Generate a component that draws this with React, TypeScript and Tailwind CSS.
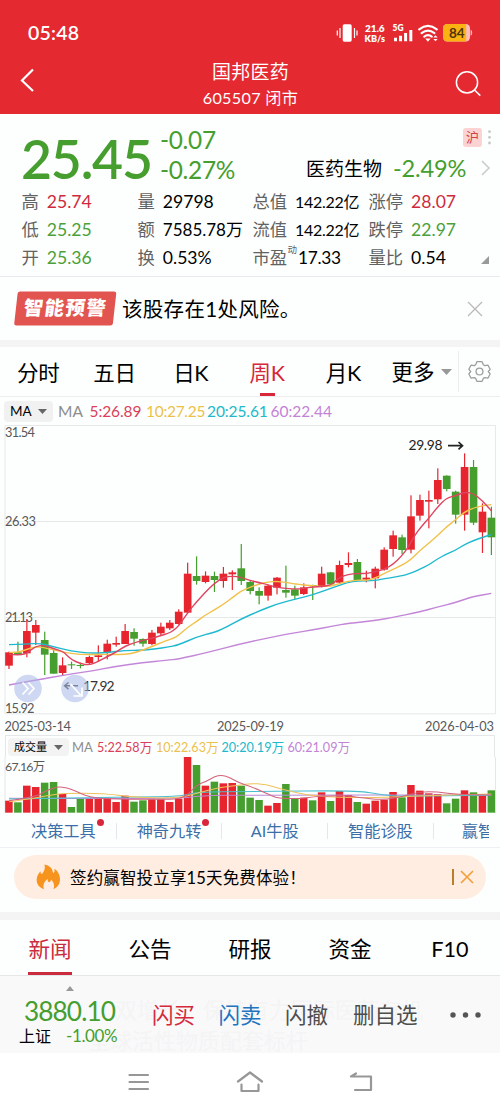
import React from "react";

type Candle = [number, number, number, number, 0 | 1];

// [high, body top, body bottom, low, rising] in thirds of a pixel
const candles: Candle[] = [
  [695, 697, 737, 747, 1], [665, 697, 703, 705, 0], [598, 633, 700, 712, 1], [600, 615, 638, 675, 1],
  [635, 660, 704, 765, 0], [690, 699, 761, 761, 0], [712, 736, 759, 768, 1], [725, 733, 735, 747, 0],
  [728, 735, 736, 745, 0], [707, 711, 729, 735, 1], [676, 706, 711, 724, 1], [659, 671, 697, 718, 1],
  [650, 669, 674, 680, 1], [612, 633, 672, 672, 1], [625, 636, 656, 677, 0], [655, 657, 671, 680, 0],
  [630, 638, 672, 676, 1], [608, 620, 640, 645, 1], [600, 608, 625, 630, 1], [568, 575, 612, 614, 1],
  [428, 461, 578, 580, 1], [409, 468, 483, 494, 0], [454, 467, 486, 490, 1], [455, 468, 480, 516, 0],
  [441, 461, 483, 503, 1], [451, 457, 463, 510, 1], [372, 445, 483, 495, 0], [480, 486, 513, 523, 0],
  [502, 513, 527, 553, 0], [494, 497, 527, 542, 1], [471, 473, 503, 523, 1], [437, 510, 518, 533, 0],
  [497, 508, 527, 537, 0], [490, 502, 522, 525, 1], [494, 495, 498, 540, 0], [440, 461, 500, 502, 1],
  [456, 457, 493, 497, 0], [422, 435, 488, 492, 1], [397, 429, 435, 442, 1], [417, 426, 480, 482, 0],
  [452, 473, 479, 487, 1], [440, 446, 475, 505, 1], [382, 389, 449, 452, 1], [332, 346, 387, 410, 1],
  [344, 352, 390, 402, 0], [226, 289, 389, 400, 1], [224, 240, 287, 302, 1], [212, 240, 245, 325, 1],
  [145, 180, 238, 252, 1], [166, 167, 207, 214, 0], [212, 215, 284, 311, 0], [100, 141, 284, 332, 1],
  [120, 141, 308, 315, 0], [250, 275, 337, 399, 1], [260, 293, 352, 405, 0],
];

const volumes: number[] = [
  212, 217, 167, 171, 158, 156, 192, 231, 205, 205, 201, 203, 216, 197, 215, 211, 208, 208, 216, 206, 75, 105, 167,
  155, 160, 159, 167, 203, 210, 227, 219, 162, 205, 203, 211, 187, 213, 183, 195, 216, 221, 212, 209, 186, 202, 165,
  182, 190, 192, 220, 206, 181, 187, 197, 181,
];

const volumeFalls = new Set([1, 4, 5, 7, 8, 14, 15, 21, 23, 26, 27, 28, 31, 32, 34, 36, 39, 44, 49, 50, 52, 54]);

const MA5 =
  "27,703 60,706 85,698 107,678 134,676 160,686 187,693 200,705 214,718 240,731 268,735 294,725 321,710 348,697 375,678 402,669 428,661 455,655 482,647 505,640 520,632 536,618 563,578 589,546 616,517 643,490 670,472 697,468 723,472 750,481 777,488 804,494 831,503 884,507 911,506 938,500 991,499 1018,472 1045,463 1072,460 1099,461 1125,455 1152,449 1179,433 1205,408 1225,382 1245,345 1260,325 1286,295 1312,262 1340,233 1366,228 1393,216 1420,220 1447,242 1474,272";
const MA10 =
  "27,697 53,698 80,688 107,680 134,683 187,696 240,704 321,703 375,704 410,697 455,680 500,661 520,655 536,646 563,622 589,605 616,585 643,570 670,553 697,533 723,513 750,502 777,492 804,486 831,484 857,487 884,492 938,498 991,500 1018,490 1045,484 1072,480 1099,481 1125,475 1150,462 1179,448 1205,436 1232,420 1259,392 1286,370 1312,347 1340,320 1366,300 1393,276 1420,264 1447,257 1474,254";
const MA20 =
  "27,674 80,672 120,670 160,680 214,693 268,700 321,698 375,691 428,691 470,686 500,682 536,675 589,651 643,637 670,626 723,597 777,573 831,552 884,538 938,525 1000,502 1045,487 1072,483 1125,482 1152,476 1205,468 1232,460 1259,448 1286,435 1312,417 1340,402 1366,391 1393,374 1420,362 1447,352 1474,344";
const MA60 =
  "27,795 107,780 214,762 268,754 348,739 428,728 500,721 536,717 616,699 723,671 831,648 884,638 938,630 1000,618 1045,610 1125,602 1179,592 1259,576 1312,561 1366,548 1393,538 1420,530 1474,520";

const V5 =
  "27,212 107,200 134,185 160,174 180,170 214,177 268,203 348,208 482,208 536,207 563,195 590,165 617,155 643,140 665,135 690,143 720,160 750,168 810,195 835,205 900,206 940,200 990,197 1045,197 1072,202 1150,210 1206,200 1259,185 1313,185 1360,193 1474,195";
const V10 =
  "27,215 100,205 134,198 187,190 310,190 400,202 536,205 590,190 660,172 720,166 750,160 795,163 857,180 940,200 1100,203 1206,200 1350,195 1474,192";
const V20 = "27,207 400,200 540,200 590,186 750,185 1072,181 1150,195 1206,199 1474,196";
const V60 = "27,205 536,207 600,197 750,195 1474,195";

/** Smooths a polyline through the midpoints of its segments. */
function smooth(points: string): string {
  const p = points.split(" ").map((s) => s.split(",").map(Number));
  let d = `M${p[0][0]} ${p[0][1]}`;
  for (let i = 1; i < p.length - 1; i++) {
    d += ` Q${p[i][0]} ${p[i][1]} ${(p[i][0] + p[i + 1][0]) / 2} ${(p[i][1] + p[i + 1][1]) / 2}`;
  }
  const last = p[p.length - 1];
  return `${d} L${last[0]} ${last[1]}`;
}

const RED = "#e6252f";
const GREEN = "#459e2e";

function StatusIcons() {
  return (
    <svg className="h-[22px] w-[138px]" viewBox="336 22 138 22" fill="#fff">
      <rect x="342.7" y="24.3" width="9" height="17.4" rx="1.6" />
      <path d="M340 28v10M337.3 30.5v5M354.5 28v10M357 30.5v5" stroke="#fff" strokeWidth="1.2" fill="none" />
      <text x="365" y="32" fontSize="10" fontWeight="800" textLength="19.5">21.6</text>
      <text x="364.5" y="41.5" fontSize="9" fontWeight="800" textLength="20.5">KB/s</text>
      <text x="392.5" y="31" fontSize="8.4" fontWeight="800" textLength="11">5G</text>
      <path d="M395.5 41.2v-3.5M400.5 41.2v-5.5M405.6 41.2v-8.2M410.8 41.2v-11.2" stroke="#fff" strokeWidth="3" />
      <path d="M419.2 29.3q8.8-6.8 17.6 0M421.6 33.1q6.4-5 12.8 0M424.3 36.6q3.7-2.8 7.4 0" stroke="#fff" strokeWidth="2.2" fill="none" strokeLinecap="round" />
      <path d="M425.2 38.5h5.4l-2.7 3.3z M433.3 37.5l2.2-2.3 2.2 2.3z M433.3 39l2.2 2.3 2.2-2.3z" />
      <rect x="443" y="24" width="27" height="17.5" rx="4.2" fill="#ffbcc0" />
      <path d="M447.2 24h19v17.5h-19a4.2 4.2 0 0 1-4.2-4.2v-9.1a4.2 4.2 0 0 1 4.2-4.2z" fill="#fbb213" />
      <path d="M470.6 29.5q1.6.8 1.6 3.2t-1.6 3.2z" fill="#ffbcc0" />
      <text x="449" y="37.8" fontSize="13.5" fontWeight="700" textLength="15.6" fill="#50350a">84</text>
    </svg>
  );
}

function Header() {
  return (
    <header className="flex h-[114px] flex-col bg-[#e42930] text-white">
      <div className="flex h-[22px] items-center justify-between pl-7 pr-[26px] mt-[22px]">
        <span className="text-[19.5px] font-semibold leading-none tracking-[0.2px]">05:48</span>
        <StatusIcons />
      </div>
      <div className="flex flex-1 items-start justify-between pl-[19px] pr-[18px]">
        <svg className="mt-[24px] h-6 w-[27px]" viewBox="0 0 27 24" fill="none" stroke="#fff" strokeWidth="2.2">
          <path d="M14 1.5 3 12.5l11 10.5" />
        </svg>
        <div className="flex flex-col items-center pt-[16px]">
          <h1 className="text-[19px] leading-[24px] tracking-[0.2px]">国邦医药</h1>
          <p className="mt-[2px] text-[16.2px] leading-[24px] tracking-[0.3px]">605507 闭市</p>
        </div>
        <svg className="mt-[26px] h-[27px] w-[27px]" viewBox="0 0 27 27" fill="none" stroke="#fff" strokeWidth="1.5">
          <circle cx="12" cy="12.4" r="10.6" />
          <path d="m19.5 20 5.8 5.6" />
        </svg>
      </div>
    </header>
  );
}

function Stat({ label, value, color = "text-black", size = "text-[17.6px]", note }: {
  label: string; value: string; color?: string; size?: string; note?: string;
}) {
  return (
    <div className="flex h-7 items-center whitespace-nowrap">
      <span className="relative text-[17.3px] text-[#626262]">
        {label}
        {note && <small className="absolute -right-[10px] top-0 text-[9.5px] leading-none">{note}</small>}
      </span>
      <span className={`${note ? "ml-[11px]" : "ml-2"} ${size} ${color}`}>{value}</span>
    </div>
  );
}

function Quote() {
  const up = "text-[#cf2a3c]";
  const down = "text-[#4c9f39]";
  return (
    <section className="flex h-[163px] flex-col border-b border-[#e9e9ee]">
      <div className="flex h-[74px] pl-[21px]">
        <strong className="w-[139px] pt-[14px] text-[53.5px] font-semibold leading-[60px] tracking-[-1.2px] text-[#459e2e]">25.45</strong>
        <div className="w-[142px] pt-[11px] text-[24.4px] leading-[29.5px] tracking-[-0.3px] text-[#459e2e]">
          <p>-0.07</p>
          <p>-0.27%</p>
        </div>
        <div className="flex flex-1 flex-col">
          <div className="flex h-[38px] items-start justify-end gap-[6px] pr-[9px] pt-[14px]">
            <span className="flex h-[19px] w-[19px] items-center justify-center rounded-[3px] bg-[#fbd3d3] text-[13px] leading-none text-[#d04146]">沪</span>
            <svg className="mt-[2px] h-4 w-[3px]" viewBox="0 0 3 16" fill="#c7c7c7">
              <circle cx="1.5" cy="1.7" r="1.4" /><circle cx="1.5" cy="7.3" r="1.4" /><circle cx="1.5" cy="13" r="1.4" />
            </svg>
          </div>
          <div className="flex h-8 items-center pl-[4px]">
            <span className="w-[87px] pt-[2px] text-[19px] text-black">医药生物</span>
            <span className="pt-[2px] text-[23.6px] tracking-[-0.2px] text-[#459e2e]">-2.49%</span>
            <svg className="ml-auto mr-[10px] h-4 w-[9px]" viewBox="0 0 9 16" fill="none" stroke="#c9c9c9" strokeWidth="1.5">
              <path d="m1 1 7 7-7 7" />
            </svg>
          </div>
        </div>
      </div>
      <div className="flex h-[87px] items-start pl-[21.5px]">
        <div className="w-[116px]">
          <Stat label="高" value="25.74" color={up} />
          <Stat label="低" value="25.25" color={down} />
          <Stat label="开" value="25.36" color={down} />
        </div>
        <div className="w-[115px]">
          <Stat label="量" value="29798" />
          <Stat label="额" value="7585.78万" size="text-[17px]" />
          <Stat label="换" value="0.53%" />
        </div>
        <div className="w-[116px]">
          <Stat label="总值" value="142.22亿" size="text-[16px] tracking-[-0.3px]" />
          <Stat label="流值" value="142.22亿" size="text-[16px] tracking-[-0.3px]" />
          <Stat label="市盈" note="动" value="17.33" size="text-[17.3px] tracking-[-0.3px]" />
        </div>
        <div className="w-[112.500px]">
          <Stat label="涨停" value="28.07" color={up} />
          <Stat label="跌停" value="22.97" color={down} />
          <Stat label="量比" value="0.54" />
        </div>
        <svg className="mt-[68px] h-2 w-2 self-start" viewBox="0 0 8 8"><path d="M8 0v8H0z" fill="#9a9a9a" /></svg>
      </div>
    </section>
  );
}

function Alert() {
  return (
    <section className="flex h-[63px] items-center pl-[14px] pr-[17px]">
      <svg className="h-[35px] w-[103px]" viewBox="0 0 103 35">
        <path d="M6 .5h94q2.5 0 2.2 2.5l-3.3 29.500q-.3 2-2.500 2H2.500q-2.500 0-2.200-2.500L3.600 2.500Q4 .5 6 .5z" fill="#e1544f" />
        <text x="0" y="0" transform="translate(9 24) skewX(-7)" fill="#fff" fontSize="19.500" fontWeight="900" textLength="82">智能预警</text>
      </svg>
      <p className="ml-[5px] pt-[2px] text-[20.5px] tracking-[0.300px] text-black">该股存在1处风险。</p>
      <svg className="ml-auto h-4 w-4" viewBox="0 0 16 16" stroke="#b9b9b9" strokeWidth="1.3">
        <path d="m1 1 14 14M15 1 1 15" />
      </svg>
    </section>
  );
}

function PeriodTabs() {
  const tabs = ["分时", "五日", "日K", "周K", "月K"];
  return (
    <nav className="flex h-[50px] items-stretch border-b border-[#ededf0] text-[21.500px] text-black">
      {tabs.map((t) => (
        <div key={t} className={t === "周K" ? "flex w-[76.300px] flex-col items-center text-[#d8263a]" : "flex w-[76.300px] flex-col items-center"}>
          <span className="h-[46px] leading-[52px] tracking-[-0.300px]">{t}</span>
          {t === "周K" && <i className="h-[3px] w-[15px] bg-[#d8263a]" />}
        </div>
      ))}
      <div className="flex flex-1 items-center pl-[10px]">
        <span className="pt-[2px]">更多</span>
        <svg className="ml-[6px] h-[6px] w-[11px]" viewBox="0 0 11 6"><path d="M0 0h11L5.500 6z" fill="#999" /></svg>
      </div>
      <div className="my-1 flex w-[42px] items-center justify-center border-l border-[#ededf0]">
        <svg className="h-[23px] w-[23px]" viewBox="0 0 24 24" fill="none" stroke="#9d9d9d" strokeWidth="1.35" strokeLinejoin="round">
          <path d="M9.300 1.800h5.400l1.300 3.200 1.600.9 3.300-.5 2.200 4.300-1.900 2.300 1.900 2.600-2.200 4.200-3.400-.500-1.500.9-1.300 3H9.300L8 19.200l-1.500-.9-3.400.5-2.200-4.200L2.800 12 .9 9.700l2.200-4.300 3.300.5L8 5z" />
          <circle cx="12" cy="12" r="3.600" />
        </svg>
      </div>
    </nav>
  );
}

function Selector({ text, wide }: { text: string; wide?: boolean }) {
  return (
    <button className={wide ? "flex h-[18px] w-[61px] items-center justify-between rounded-[4px] bg-[#f3f3f4] px-[6px] text-[11px] text-black" : "flex h-[21px] w-[49px] items-center justify-between rounded-[4px] bg-[#f1f1f2] px-[6px] text-[13.500px] text-black"}>
      {text}
      <svg className="h-[5px] w-[9px]" viewBox="0 0 9 5"><path d="M0 0h9L4.500 5z" fill="#666" /></svg>
    </button>
  );
}

function PriceChart() {
  const lines: [string, string][] = [[MA60, "#c386d8"], [MA20, "#1fb9cf"], [MA10, "#f2c14a"], [MA5, "#df4460"]];
  return (
    <svg className="h-[310px] w-full" viewBox="0 425 500 310">
      <path d="M5 425.500h490.500v288.300H5zM5 521.500h490M5 617.500h490" fill="none" stroke="#e6e8ea" />
      <g fontSize="12.800" fill="#585858">
        <text x="5" y="436.500" textLength="30">31.54</text>
        <text x="5" y="526" textLength="31">26.33</text>
        <text x="5" y="622" textLength="28">21.13</text>
        <text x="5" y="713" textLength="29.500">15.92</text>
        <text x="4.500" y="731" textLength="66.500">2025-03-14</text>
        <text x="217" y="731" textLength="67">2025-09-19</text>
        <text x="425" y="731" textLength="69">2026-04-03</text>
      </g>
      <g transform="translate(0 420) scale(.333333)">
        {candles.map(([high, top, bottom, low, up], i) => {
          const x = 27 + i * 26.8;
          const color = up ? RED : GREEN;
          return (
            <g key={i} fill={color}>
              <rect x={x - 1.8} y={high} width="3.600" height={low - high} />
              <rect x={x - 11.500} y={top} width="23" height={Math.max(bottom - top, 3)} />
            </g>
          );
        })}
        {lines.map(([points, color]) => (
          <path key={color} d={smooth(points)} fill="none" stroke={color} strokeWidth="4.200" />
        ))}
      </g>
      <g fontSize="13.800" fill="#222">
        <text x="408.500" y="450.300" textLength="34">29.98</text>
        <text x="83" y="690.500" textLength="31.500" fill="#333">17.92</text>
        <path d="M448 445.700h14M458.500 442l4 3.700-4 3.700" fill="none" stroke="#222" strokeWidth="1.700" />
        <path d="M68.500 682.500l-4 3.300 4 3.300M65 685.800h5M73 685.800h5" fill="none" stroke="#444" strokeWidth="1.400" />
      </g>
      <circle cx="28" cy="688.500" r="13.800" fill="#a9b8e8" fillOpacity=".55" />
      <circle cx="75" cy="688.500" r="13.800" fill="#a9b8e8" fillOpacity=".55" />
      <path d="m22.500 682.500 5.500 6-5.500 6M28.500 682.500l5.500 6-5.500 6M70.500 684l10 11M82 687.500v8.500h-8.500" fill="none" stroke="#fff" strokeWidth="1.700" />
    </svg>
  );
}

function VolumeChart() {
  const lines: [string, string][] = [[V60, "#b989d6"], [V20, "#4bbfd0"], [V10, "#efc35c"], [V5, "#d4627c"]];
  return (
    <div className="flex h-[78px] flex-col">
      <div className="mx-[5px] flex h-[22px] items-center border-x border-t border-[#e4e6e8] pl-[2px] pt-px text-[12.600px] whitespace-nowrap">
        <Selector text="成交量" wide />
        <span className="ml-[3px] w-[25px] pt-[2px] text-[13px] text-[#8d8d8d]">MA</span>
        <span className="w-[59px] pt-[2px] text-[#d93f5a]">5:22.58万</span>
        <span className="w-[65.500px] pt-[2px] text-[#ecc14b]">10:22.63万</span>
        <span className="w-[66px] pt-[2px] text-[#22b8cb]">20:20.19万</span>
        <span className="pt-[2px] text-[#c283d6]">60:21.09万</span>
      </div>
      <svg className="h-[56px] w-full" viewBox="0 757 500 56">
        <path d="M5 757v56M495.500 757v56" stroke="#e4e6e8" />
        <text x="5" y="770.500" fontSize="12.300" fill="#585858" textLength="40">67.16万</text>
        <g transform="translate(0 730) scale(.333333)">
          {volumes.map((top, i) => (
            <rect key={i} x={15.500 + i * 26.8} y={top} width="22.500" height={248 - top} fill={volumeFalls.has(i) ? GREEN : RED} />
          ))}
          {lines.map(([points, color]) => (
            <path key={color} d={smooth(points)} fill="none" stroke={color} strokeWidth="3.200" />
          ))}
        </g>
      </svg>
    </div>
  );
}

function ToolLinks() {
  const items = [
    { t: "决策工具", dot: true }, { t: "神奇九转", dot: true }, { t: "AI牛股", dot: false }, { t: "智能诊股", dot: false },
  ];
  return (
    <div className="flex h-[35px] items-center border-b border-[#edf0f4] pl-[11px] pr-[11px] pt-[2px] text-[16.200px] text-[#3c6fa8]">
      {items.map(({ t, dot }) => (
        <div key={t} className="flex h-4 w-[105.700px] shrink-0 items-center justify-center border-r border-[#e3e6ea]">
          <span className="relative">
            {t}
            {dot && <i className="absolute -right-[8px] top-0 h-[7px] w-[7px] rounded-full bg-[#d9263a]" />}
          </span>
        </div>
      ))}
      <div className="flex-1 overflow-hidden whitespace-nowrap pl-[28px]">赢智</div>
    </div>
  );
}

function Promo() {
  return (
    <section className="h-[64px] px-[14px] pt-[7px]">
      <div className="flex h-[44px] items-center rounded-full bg-[#ffede2] pl-[22px] pr-[12px]">
        <svg className="h-[26px] w-[25px]" viewBox="0 0 25 26">
          <path d="M8.500.5c5 1 8 4 8.300 7.500.2 1 .8 1.200 1.300.3.600-1 .6-2.100.2-3.500 3.500 2 5.600 6 5.700 10.200.1 5-2.500 8.500-6.500 10.200 1.300-3 .6-7-2.500-9.500-.3 2-1.200 2.800-2.300 2.300-1-.5-1.200-1.500-.7-3-3.700 2-5.500 6-4 10.200C3 23.500.5 20 .7 15.500.8 12 2.500 9.500 4.400 7.200c.2 1.500.6 2.600 1.500 2.900C8.300 7.500 9.500 4 8.500.5z" fill="#f7941e" />
        </svg>
        <p className="ml-[9px] pt-[2px] text-[16.500px] tracking-[0.150px] text-black">签约赢智投立享15天免费体验！</p>
        <i className="ml-auto h-4 w-[2px] bg-[#b98029]" />
        <svg className="ml-[6px] h-[14px] w-[14px]" viewBox="0 0 14 14" stroke="#f2a03c" strokeWidth="1.700"><path d="m1 1 12 12M13 1 1 13" /></svg>
      </div>
    </section>
  );
}

function InfoTabs() {
  return (
    <nav className="grid h-[56px] grid-cols-5 border-b border-[#e4e6e8] text-[21.600px] text-black">
      {["新闻", "公告", "研报", "资金", "F10"].map((t, i) => (
        <div key={t} className={i === 0 ? "flex flex-col items-center text-[#cb2c3d]" : "flex flex-col items-center"}>
          <span className="h-[52px] leading-[58px]">{t}</span>
          {i === 0 && <i className="h-[3px] w-11 bg-[#cb2c3d]" />}
        </div>
      ))}
    </nav>
  );
}

function TradeBar() {
  return (
    <section className="relative h-[77px] overflow-hidden bg-[#f9f9fa]">
      <div className="absolute left-[88px] top-[18px] whitespace-nowrap text-[22px] leading-[31px] text-[#f4f4f5]">
        <p className="pl-[27px]">双增长，保持有力国际医药有机</p>
        <p>全球活性物质配套标杆</p>
      </div>
      <div className="relative flex h-full items-start">
        <div className="w-[140px] pt-[10px]">
          <svg className="ml-[66px] h-[5px] w-2" viewBox="0 0 8 5"><path d="M4 0l4 5H0z" fill="#999" /></svg>
          <p className="mt-[5px] pl-[24px] text-[26.200px] leading-[31px] tracking-[-0.900px] text-[#459e2e]">3880.10</p>
          <p className="flex items-center pl-[19px] leading-[18px] text-black">
            <span className="w-[47px] text-[16px]">上证</span>
            <span className="text-[17px] tracking-[-0.400px] text-[#459e2e]">-1.00%</span>
          </p>
        </div>
        <div className="flex h-full flex-1 items-center pt-[2px] text-[21.500px] leading-none text-[#4d4d4d]">
          <span className="w-[66.500px] pl-[12px] text-[#d42a3b]">闪买</span>
          <span className="w-[66.500px] pl-[12px] text-[#2273c0]">闪卖</span>
          <span className="w-[67px] pl-[12px]">闪撤</span>
          <span className="w-[110px] pl-[13px]">删自选</span>
          <svg className="mb-[2px] h-[6px] w-[31px]" viewBox="0 0 31 6" fill="#555"><circle cx="3" cy="3" r="2.700" /><circle cx="15.500" cy="3" r="2.700" /><circle cx="28" cy="3" r="2.700" /></svg>
        </div>
      </div>
    </section>
  );
}

function SystemNav() {
  return (
    <footer className="flex h-[58px] items-start bg-white pt-[18px]">
      <svg className="ml-[128px] h-[22px] w-[245px]" viewBox="128 1071 245 22" fill="none" stroke="#979797" strokeWidth="2.200" strokeLinecap="round" strokeLinejoin="round">
        <path d="M129.500 1075h18.500M129.500 1082h18.500M129.500 1089h18.500" />
        <path d="m238 1081.500 12-9 12 9M241.500 1084.500v6.500h17v-6.500" />
        <path d="M356 1073.500l-5 3h20v13.500h-16" />
      </svg>
    </footer>
  );
}

export default function App() {
  return (
    <main className="flex h-[1111px] w-[500px] flex-col overflow-hidden bg-[#fdfffe] font-['Lato','Noto_Sans_CJK_SC',sans-serif] [&>*]:shrink-0">
      <Header />
      <Quote />
      <Alert />
      <div className="h-[7px] bg-[#f4f4f5]" />
      <PeriodTabs />
      <div className="flex h-[28px] items-center pl-1 pt-px text-[15.500px]">
        <Selector text="MA" />
        <span className="ml-[5px] w-[31.500px] text-[#8d8d8d]">MA</span>
        <span className="w-[56.500px] tracking-[-0.100px] text-[#d93f5a]">5:26.89</span>
        <span className="w-[61px] tracking-[-0.300px] text-[#ecc14b]">10:27.25</span>
        <span className="w-[63.500px] tracking-[-0.100px] text-[#22b8cb]">20:25.61</span>
        <span className="text-[#c283d6]">60:22.44</span>
      </div>
      <PriceChart />
      <VolumeChart />
      <ToolLinks />
      <Promo />
      <div className="h-[8px] bg-[#f4f4f5]" />
      <InfoTabs />
      <TradeBar />
      <SystemNav />
    </main>
  );
}
